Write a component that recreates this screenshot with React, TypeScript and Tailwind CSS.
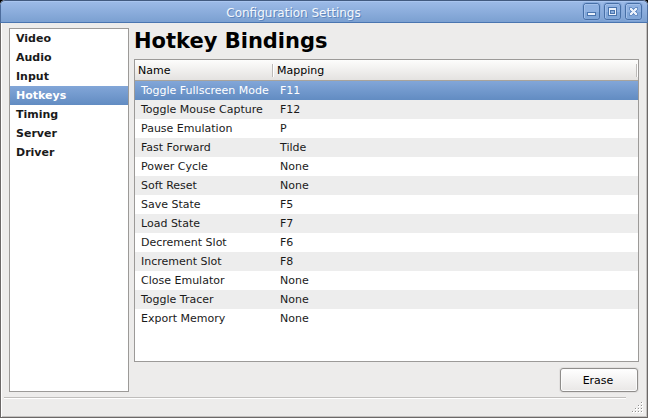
import { useState } from "react";

const sections = ["Video", "Audio", "Input", "Hotkeys", "Timing", "Server", "Driver"];

const bindings = [
  ["Toggle Fullscreen Mode", "F11"],
  ["Toggle Mouse Capture", "F12"],
  ["Pause Emulation", "P"],
  ["Fast Forward", "Tilde"],
  ["Power Cycle", "None"],
  ["Soft Reset", "None"],
  ["Save State", "F5"],
  ["Load State", "F7"],
  ["Decrement Slot", "F6"],
  ["Increment Slot", "F8"],
  ["Close Emulator", "None"],
  ["Toggle Tracer", "None"],
  ["Export Memory", "None"],
];

const selectedFill = "bg-linear-to-b from-[#82a6d8] to-[#628cc2] text-white";

type Glyph = "minimize" | "maximize" | "close";

function WindowButton({ glyph, label }: { glyph: Glyph; label: string }) {
  return (
    <button type="button" aria-label={label} className="size-[19px]">
      <svg viewBox="0 0 19 19" className="block size-[19px]" shapeRendering="crispEdges">
        <rect x="0.5" y="0.5" width="18" height="18" rx="3" fill="none" stroke="#86a9db" shapeRendering="auto" />
        <rect x="1.5" y="1.5" width="16" height="16" rx="2.5" fill="#8fb1e1" stroke="#476fa6" shapeRendering="auto" />
        <path d="M3 2.5h13M2.5 3v13" stroke="#a3c0ea" fill="none" />
        <path d="M3 10h14v6h-1v1H3z" fill="#80a6d8" />
        {glyph === "minimize" && (
          <>
            <rect x="5" y="10" width="9" height="4" fill="#4a74ad" />
            <rect x="6" y="11" width="7" height="2" fill="#e9f0fa" />
          </>
        )}
        {glyph === "maximize" && (
          <>
            <rect x="5" y="5" width="9" height="9" fill="#4a74ad" />
            <rect x="6" y="6" width="7" height="7" fill="#e9f0fa" />
            <rect x="7" y="8" width="5" height="4" fill="#4a74ad" />
            <rect x="8" y="9" width="3" height="2" fill="#8aaddd" />
          </>
        )}
        {glyph === "close" && (
          <>
            <path d="M5 5h3v1h3V5h3v3h-1v3h1v3h-3v-1H8v1H5v-3h1V8H5z" fill="#6990c6" />
            <path
              d="M6 6h2v1h1v1h1V7h1V6h2v2h-1v1h-1v1h1v1h1v2h-2v-1h-1v-1H9v1H8v1H6v-2h1v-1h1V9H7V8H6z"
              fill="#e9f0fa"
            />
          </>
        )}
      </svg>
    </button>
  );
}

function SizeGrip() {
  const dots = [
    [9, 0],
    [6, 3], [9, 3],
    [3, 6], [6, 6], [9, 6],
    [0, 9], [3, 9], [6, 9], [9, 9],
  ];
  return (
    <svg viewBox="0 0 11 11" className="size-[11px]" shapeRendering="crispEdges" aria-hidden="true">
      {dots.map(([x, y]) => (
        <g key={`${x}-${y}`}>
          <rect x={x} y={y} width="2" height="2" fill="#ffffff" />
          <rect x={x} y={y} width="1" height="1" fill="#8f8e8d" />
        </g>
      ))}
    </svg>
  );
}

export default function App() {
  const [section, setSection] = useState("Hotkeys");
  const [selected, setSelected] = useState(0);

  return (
    <div className="min-h-screen bg-black font-['DejaVu_Sans',sans-serif] text-[11px] leading-[19px] text-[#1a1a1a]">
      <div className="flex min-h-screen flex-col overflow-hidden rounded-t-[5px] bg-[#edeceb]">
        <header className="flex h-[23px] items-center rounded-t-[5px] border-x border-t border-b border-x-[#4c6c9c] border-t-[#425a80] border-b-[#4a75b0] bg-linear-to-b from-[#9dbbe8] to-[#7ba0d1] pr-1 pl-1 shadow-[inset_0_1px_0_#a9c5ef]">
          <h1 className="min-w-0 flex-1 truncate pt-1 text-center text-[12px] text-[#f3f7fc] [text-shadow:1px_1px_0_#5f86bd]">
            Configuration Settings
          </h1>
          <div className="flex gap-0.5">
            <WindowButton glyph="minimize" label="Minimize" />
            <WindowButton glyph="maximize" label="Maximize" />
            <WindowButton glyph="close" label="Close" />
          </div>
        </header>

        <div className="flex flex-1 flex-col border-x border-b border-[#6b6867] shadow-[inset_1px_0_0_#fff,inset_-1px_-1px_0_#c4c2c0]">
          <div className="flex flex-1 gap-[5px] px-2 py-[5px]">
            <nav className="w-[120px] shrink-0 border border-[#9c9a98] bg-white" aria-label="Sections">
              <ul>
                {sections.map((name) => (
                  <li key={name}>
                    <button
                      type="button"
                      onClick={() => setSection(name)}
                      aria-current={name === section}
                      className={`block h-[19px] w-full px-1.5 text-left font-bold ${name === section ? selectedFill : ""}`}
                    >
                      {name}
                    </button>
                  </li>
                ))}
              </ul>
            </nav>

            <main className="flex min-w-0 flex-1 flex-col">
              <h2 className="h-[31px] text-[21px] leading-[26px] font-bold text-black">Hotkey Bindings</h2>
              <div className="flex-1 border border-[#9c9a98] bg-white">
                <table className="w-full table-fixed border-collapse text-left">
                  <colgroup>
                    <col className="w-[139px]" />
                    <col />
                  </colgroup>
                  <thead>
                    <tr className="h-[21px] bg-linear-to-b from-[#fdfdfc] to-[#e3e1df] text-black shadow-[inset_0_-1px_0_#a8a39b]">
                      <th className="p-0 font-normal">
                        <div className="flex h-[21px] items-center justify-between pl-[3px]">
                          Name
                          <span className="h-[13px] w-0.5 border-l border-r border-l-[#bdbbb9] border-r-white" />
                        </div>
                      </th>
                      <th className="p-0 font-normal">
                        <div className="flex h-[21px] items-center justify-between pl-[3px]">
                          Mapping
                          <span className="h-[13px] w-0.5 border-l border-r border-l-[#bdbbb9] border-r-white" />
                        </div>
                      </th>
                    </tr>
                  </thead>
                  <tbody>
                    {bindings.map(([name, mapping], i) => (
                      <tr
                        key={name}
                        onClick={() => setSelected(i)}
                        aria-selected={i === selected}
                        className={`h-[19px] ${i === selected ? selectedFill : i % 2 ? "bg-[#ededed]" : "bg-white"}`}
                      >
                        <td className="py-0 pr-0 pl-1.5 whitespace-nowrap">{name}</td>
                        <td className="py-0 pr-0 pl-1.5 whitespace-nowrap">{mapping}</td>
                      </tr>
                    ))}
                  </tbody>
                </table>
              </div>
              <div className="flex justify-end pt-1.5 pr-px">
                <button
                  type="button"
                  className="flex h-6 w-[78px] items-center justify-center rounded-[3px] border border-[#8f8d8b] bg-linear-to-b from-white to-[#e9e7e6] pt-px pr-0.5 text-black shadow-[0_0_0_1px_#e2e0df,inset_0_0_0_1px_#fbfbfb]"
                >
                  Erase
                </button>
              </div>
            </main>
          </div>

          <footer className="flex h-5 items-start gap-1.5 pr-1 pl-[3px]">
            <div className="h-0.5 flex-1 border-t border-b border-t-[#bfbdbb] border-b-white" />
            <div className="pt-[5px]">
              <SizeGrip />
            </div>
          </footer>
        </div>
      </div>
    </div>
  );
}
